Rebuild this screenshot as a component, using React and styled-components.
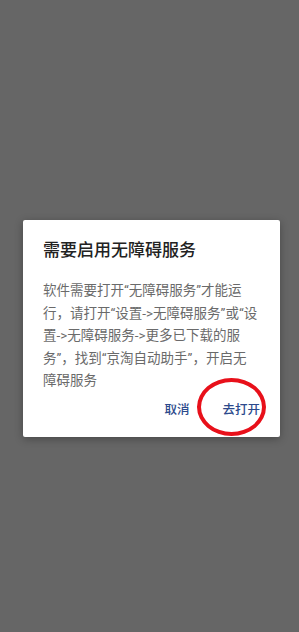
import styled, { createGlobalStyle } from "styled-components"

const Global = createGlobalStyle`
  html, body { margin: 0; padding: 0; background: #666666; }
  body { font-family: Roboto, "Noto Sans CJK SC", sans-serif; }
`

const Screen = styled.div`
  width: 299px;
  height: 632px;
  background: #666666;
  display: flex;
  justify-content: center;
  align-items: flex-start;
  padding-top: 220px;
  box-sizing: border-box;
`

const Dialog = styled.div`
  width: 257px;
  box-sizing: border-box;
  background: #ffffff;
  border-radius: 2px;
  box-shadow: 0 2px 8px rgba(0, 0, 0, 0.3);
  padding: 18px 20px 13px 20px;
  margin-left: 4px;
`

const Title = styled.h2`
  margin: 0;
  font-size: 17px;
  font-weight: 500;
  color: #222222;
  line-height: 24px;
`

const Message = styled.p`
  margin: 17px 0 0 0;
  font-size: 13.5px;
  line-height: 22.6px;
  color: #6a6a6a;
  white-space: nowrap;
`

const Actions = styled.div`
  display: flex;
  justify-content: flex-end;
  gap: 33px;
  margin-top: 4px;
`

const Action = styled.button`
  position: relative;
  border: none;
  background: none;
  padding: 4px 0;
  font-family: inherit;
  font-size: 12.5px;
  font-weight: 500;
  color: #2c4a8c;
  line-height: 20px;
`

const Mark = styled.span`
  position: absolute;
  left: -25px;
  top: -18px;
  width: 61px;
  height: 50px;
  border: 4px solid #e8101a;
  border-radius: 50%;
  pointer-events: none;
`

export default function App() {
  return (
    <>
      <Global />
      <Screen>
        <Dialog>
          <Title>需要启用无障碍服务</Title>
          <Message>
            软件需要打开“无障碍服务”才能运<br />
            行，请打开“设置-&gt;无障碍服务”或“设<br />
            置-&gt;无障碍服务-&gt;更多已下载的服<br />
            务”，找到“京淘自动助手”，开启无<br />
            障碍服务
          </Message>
          <Actions>
            <Action>取消</Action>
            <Action>
              去打开
              <Mark />
            </Action>
          </Actions>
        </Dialog>
      </Screen>
    </>
  )
}
